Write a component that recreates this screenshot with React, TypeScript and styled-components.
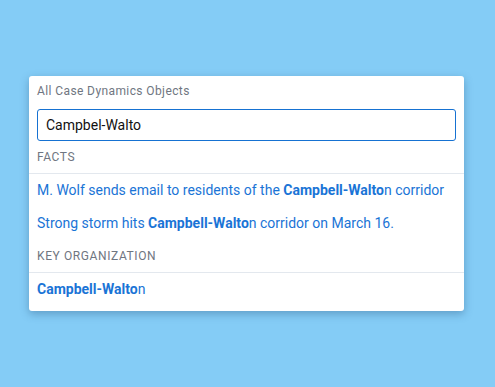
import React from 'react'
import styled, { createGlobalStyle } from 'styled-components'

const Global = createGlobalStyle`
  html, body { margin: 0; padding: 0; }
  body {
    background: #84ccf6;
    font-family: Roboto, "Liberation Sans", sans-serif;
    width: 495px;
    height: 387px;
    overflow: hidden;
  }
`

const Page = styled.div`
  padding: 76px 31px 0 29px;
`

const Card = styled.div`
  background: #fff;
  border-radius: 3px;
  box-shadow: 0 3px 8px rgba(30, 70, 110, 0.35);
  padding-bottom: 5px;
`

const Label = styled.div`
  font-size: 12px;
  line-height: 14px;
  letter-spacing: 0.4px;
  color: #6f7681;
  padding: 8px 8px 0;
  height: 33px;
  box-sizing: border-box;
`

const Field = styled.div`
  padding: 0 8px;
`

const Input = styled.input`
  display: block;
  width: 100%;
  box-sizing: border-box;
  height: 32px;
  border: 1px solid #1672d2;
  border-radius: 3px;
  padding: 0 8px;
  font-family: inherit;
  font-size: 14px;
  color: #111;
  outline: none;
`

const Section = styled.div`
  font-size: 12px;
  line-height: 14px;
  letter-spacing: 0.6px;
  color: #6f7681;
  padding: 9px 8px 0;
  height: 33px;
  box-sizing: border-box;
  border-bottom: 1px solid #e3e8ee;
`

const Item = styled.div`
  font-size: 14px;
  color: #1a74d6;
  padding: 0 8px;
  height: 33px;
  line-height: 33px;
  white-space: nowrap;
  b { font-weight: 700; }
`

const Match = () => <b>Campbell-Walto</b>

export default function App() {
  return (
    <Page>
      <Global />
      <Card>
        <Label>All Case Dynamics Objects</Label>
        <Field>
          <Input defaultValue="Campbel-Walto" />
        </Field>
        <Section>FACTS</Section>
        <Item>M. Wolf sends email to residents of the <Match />n corridor</Item>
        <Item>Strong storm hits <Match />n corridor on March 16.</Item>
        <Section>KEY ORGANIZATION</Section>
        <Item><Match />n</Item>
      </Card>
    </Page>
  )
}
